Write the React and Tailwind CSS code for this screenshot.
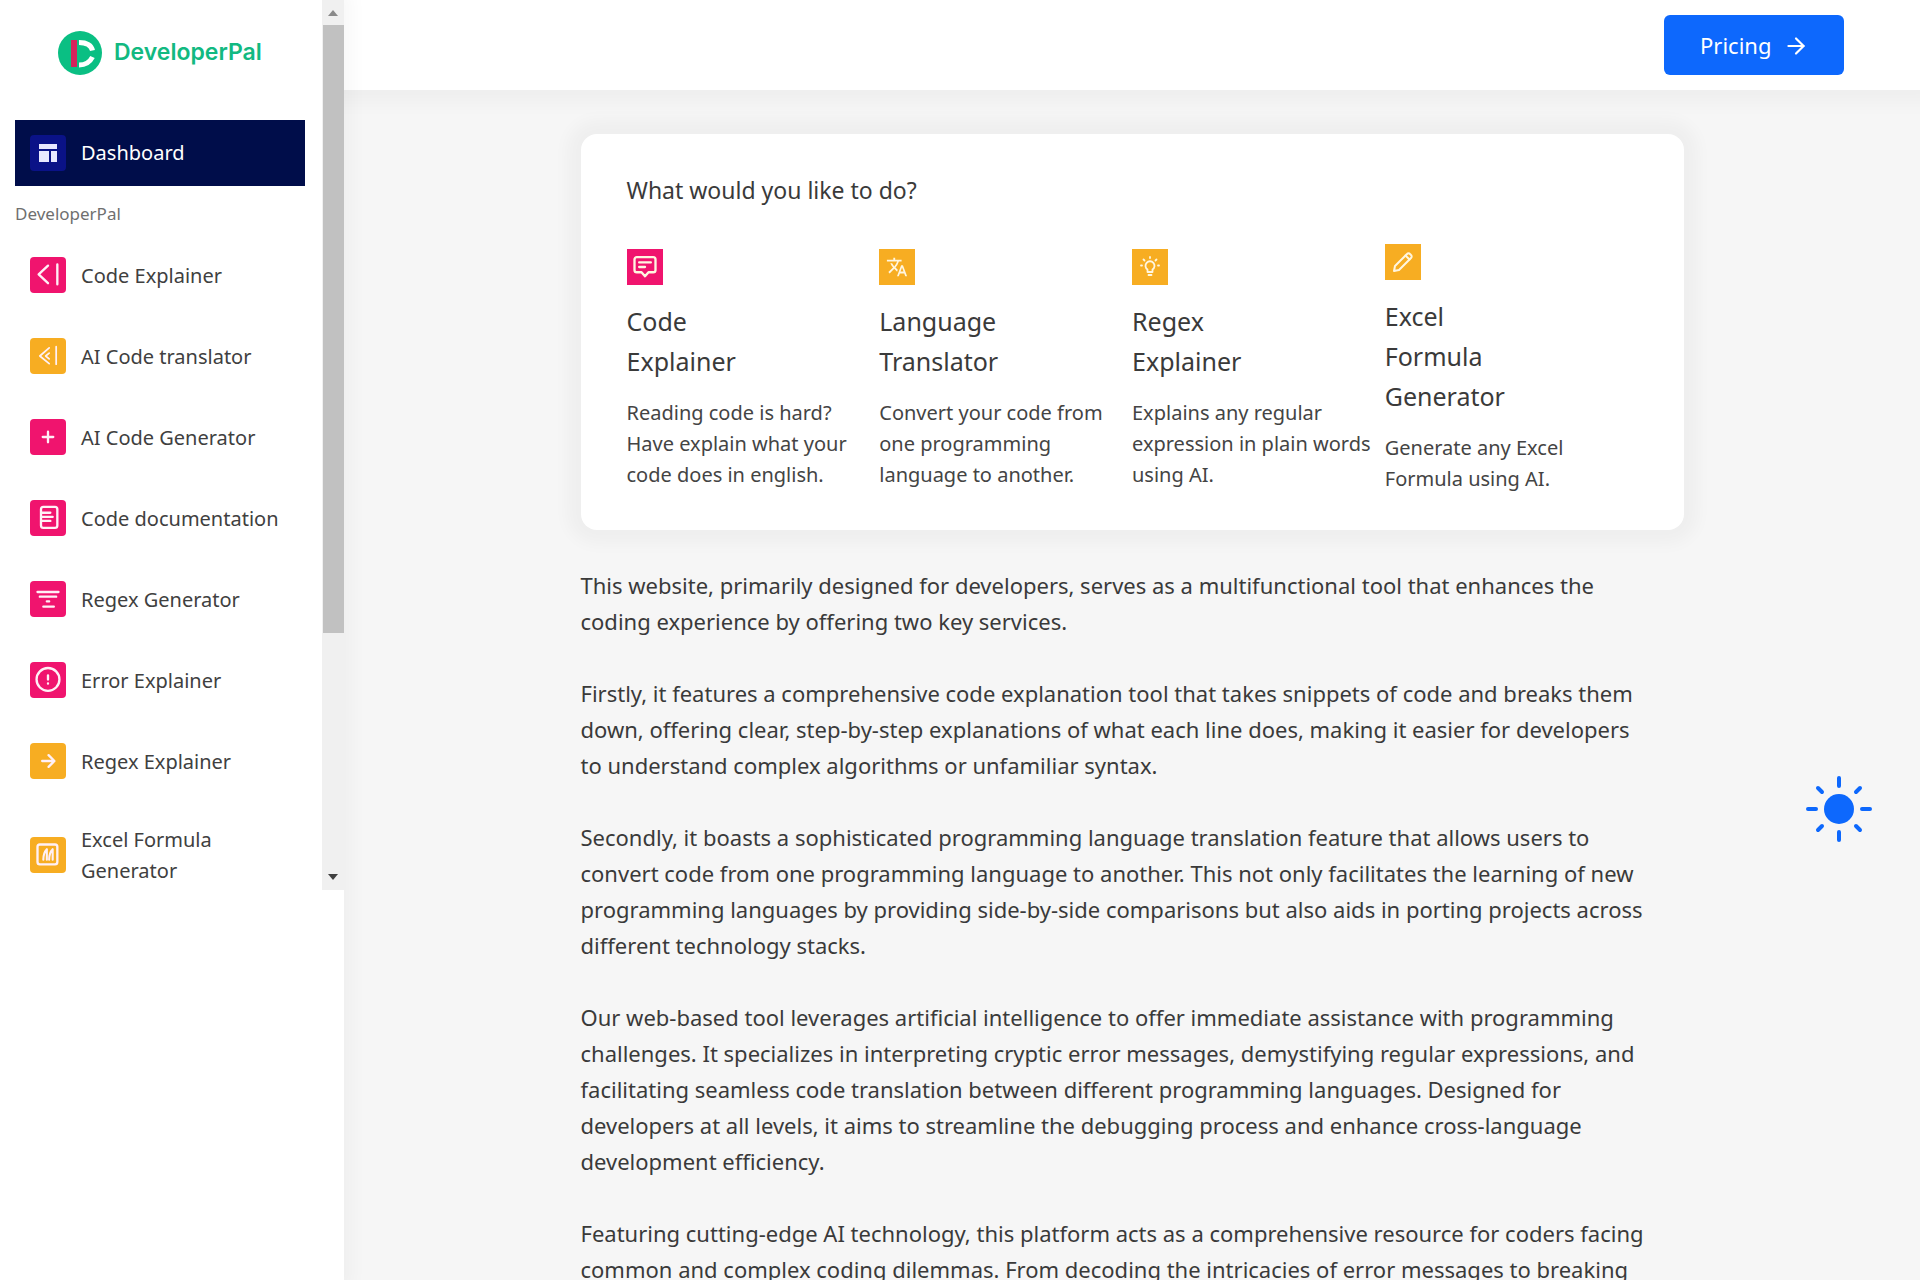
import React from 'react';
import { ArrowRight } from 'lucide-react';
import { MdTranslate } from 'react-icons/md';

const PINK = 'bg-[#f0146e]';
const YELLOW = 'bg-[#f7ad22]';

const Icon = ({ children, className = 'w-7 h-7' }) => (
  <svg
    viewBox="0 0 24 24"
    className={className}
    fill="none"
    stroke="currentColor"
    strokeWidth="2"
    strokeLinecap="round"
    strokeLinejoin="round"
    aria-hidden="true"
  >
    {children}
  </svg>
);

const CodeIcon = () => (
  <Icon>
    <path d="M12 4 4 11.500l8 7.500M20 3v17" />
  </Icon>
);

const TranslateCodeIcon = () => (
  <Icon>
    <path d="M13 5 5 12l8 6.500M13 9.500l-3 2.500 3 2.500M19 4v15" strokeWidth="1.500" />
  </Icon>
);

const PlusIcon = () => (
  <Icon>
    <path d="M12 7.500v9M7.500 12h9" />
  </Icon>
);

const DocIcon = () => (
  <Icon>
    <rect x="6" y="2.500" width="14" height="18" rx="2" />
    <path d="M7 7.500h7M7 11h9M7 14.500h7" />
  </Icon>
);

const LinesIcon = () => (
  <Icon>
    <path d="M3 6h18M5 10h14M11 14h2M8 18.500h9" />
  </Icon>
);

const ErrorIcon = () => (
  <Icon>
    <circle cx="12" cy="11.500" r="9.800" />
    <path d="M12 8v3.500M12 15v.1" />
  </Icon>
);

const ArrowIcon = () => (
  <Icon>
    <path d="M7 12h9M12.500 7l5 5-5 5" />
  </Icon>
);

const FormulaIcon = () => (
  <Icon>
    <rect x="3" y="3" width="17" height="17" rx="2" />
    <path d="M8 16c0-4 1-7 3-9v9M13 16c0-4 1-7 3-9v9" strokeWidth="1.800" />
  </Icon>
);

const MessageIcon = () => (
  <Icon className="w-7 h-7">
    <path d="M3 5.500a2 2 0 0 1 2-2h14a2 2 0 0 1 2 2v9a2 2 0 0 1-2 2h-4L12 20l-3-3.500H5a2 2 0 0 1-2-2z" />
    <path d="M7 8h10M7 12h5" />
  </Icon>
);

const BulbIcon = () => (
  <Icon className="w-6 h-6">
    <path d="M9.500 17v-2.500a4.500 4.500 0 1 1 5 0V17z" strokeWidth="1.800" />
    <path d="M10.500 20h3M12 2v1M4 10.500H3M21 10.500h-1M5.500 4.500l1 1M18.500 4.500l-1 1" strokeWidth="1.800" />
  </Icon>
);

const PencilIcon = () => (
  <Icon className="w-6 h-6">
    <path d="M3 21l1-5L16 4a2 2 0 0 1 3 0l1 1a2 2 0 0 1 0 3L8 20z" />
    <path d="M14.500 5.500l4 4" />
  </Icon>
);

const menu = [
  { label: 'Code Explainer', color: PINK, icon: <CodeIcon /> },
  { label: 'AI Code translator', color: YELLOW, icon: <TranslateCodeIcon /> },
  { label: 'AI Code Generator', color: PINK, icon: <PlusIcon /> },
  { label: 'Code documentation', color: PINK, icon: <DocIcon /> },
  { label: 'Regex Generator', color: PINK, icon: <LinesIcon /> },
  { label: 'Error Explainer', color: PINK, icon: <ErrorIcon /> },
  { label: 'Regex Explainer', color: YELLOW, icon: <ArrowIcon /> },
  { label: 'Excel Formula Generator', color: YELLOW, icon: <FormulaIcon /> },
];

const tools = [
  {
    title: 'Code Explainer',
    text: 'Reading code is hard? Have explain what your code does in english.',
    color: PINK,
    icon: <MessageIcon />,
  },
  {
    title: 'Language Translator',
    text: 'Convert your code from one programming language to another.',
    color: YELLOW,
    icon: <MdTranslate className="w-[22px] h-[22px]" />,
  },
  {
    title: 'Regex Explainer',
    text: 'Explains any regular expression in plain words using AI.',
    color: YELLOW,
    icon: <BulbIcon />,
  },
  {
    title: 'Excel Formula Generator',
    text: 'Generate any Excel Formula using AI.',
    color: YELLOW,
    icon: <PencilIcon />,
  },
];

const paragraphs = [
  'This website, primarily designed for developers, serves as a multifunctional tool that enhances the coding experience by offering two key services.',
  'Firstly, it features a comprehensive code explanation tool that takes snippets of code and breaks them down, offering clear, step-by-step explanations of what each line does, making it easier for developers to understand complex algorithms or unfamiliar syntax.',
  'Secondly, it boasts a sophisticated programming language translation feature that allows users to convert code from one programming language to another. This not only facilitates the learning of new programming languages by providing side-by-side comparisons but also aids in porting projects across different technology stacks.',
  'Our web-based tool leverages artificial intelligence to offer immediate assistance with programming challenges. It specializes in interpreting cryptic error messages, demystifying regular expressions, and facilitating seamless code translation between different programming languages. Designed for developers at all levels, it aims to streamline the debugging process and enhance cross-language development efficiency.',
  'Featuring cutting-edge AI technology, this platform acts as a comprehensive resource for coders facing common and complex coding dilemmas. From decoding the intricacies of error messages to breaking',
];

const Logo = () => (
  <a href="#" className="flex items-center gap-3 h-[105px] pl-[43px]">
    <svg viewBox="0 0 44 44" className="w-11 h-11" aria-hidden="true">
      <circle cx="22" cy="22" r="22" fill="#0abf83" />
      <path d="M13 9h6v27h-6z" fill="#d5215c" />
      <path d="M21 11.500c7 0 12 2 13.500 8M21 34c7 0 11-3 13.500-8" fill="none" stroke="#fff" strokeWidth="5" />
    </svg>
    <span className="font-['Inter'] text-[23px] font-semibold text-[#12b981]">DeveloperPal</span>
  </a>
);

const Sidebar = () => (
  <aside className="w-[344px] shrink-0 bg-white shadow-[0_0_16px_8px_rgba(0,0,0,0.03)] z-10">
    <div className="flex">
      <nav className="flex-1 pl-[15px] pr-[17px]">
        <Logo />
        <a href="#" className="mt-[15px] flex items-center px-[15px] h-[66px] bg-[#000d4a] text-white text-xl">
          <span className="flex items-center justify-center w-9 h-9 mr-[15px] rounded bg-[#0a1287]">
            <svg viewBox="0 0 18 18" className="w-[18px] h-[18px]" fill="#e8e8ff" aria-hidden="true">
              <path d="M0 0h18v5H0zM0 7h10v11H0zM12 7h6v11h-6z" />
            </svg>
          </span>
          Dashboard
        </a>
        <h6 className="py-[10px] text-[17px] leading-9 text-[#6f6f6f]">DeveloperPal</h6>
        <ul className="flex flex-col gap-[15px]">
          {menu.map((item) => (
            <li key={item.label} className="group">
              <a
                href="#"
                className="flex items-center py-[15px] px-[15px] group-last:pb-1 text-xl leading-[31px] text-[#404040]"
              >
                <span className={`flex items-center justify-center shrink-0 w-9 h-9 mr-[15px] rounded text-[#fff0f6] ${item.color}`}>
                  {item.icon}
                </span>
                <span className="group-last:w-40">{item.label}</span>
              </a>
            </li>
          ))}
        </ul>
      </nav>
      <div className="w-[22px] flex flex-col items-center bg-[#f0f0f0]" aria-hidden="true">
        <span className="h-[25px] flex items-center text-[#8a8a8a]">
          <svg viewBox="0 0 10 6" className="w-[10px] h-[6px]" fill="currentColor">
            <path d="M0 6 5 0l5 6z" />
          </svg>
        </span>
        <span className="w-[21px] h-[608px] bg-[#c1c1c1]" />
        <span className="mt-auto h-[26px] flex items-center text-[#404040]">
          <svg viewBox="0 0 10 6" className="w-[10px] h-[6px]" fill="currentColor">
            <path d="M0 0h10L5 6z" />
          </svg>
        </span>
      </div>
    </div>
  </aside>
);

const Header = () => (
  <header className="h-[90px] flex items-center justify-end pr-[76px] bg-white shadow-[0_0_16px_14px_rgba(0,0,0,0.03)]">
    <a
      href="#"
      className="flex items-center gap-3 w-[180px] h-[60px] pt-px pl-9 rounded-md bg-[#0d68fd] text-white text-[22px]"
    >
      Pricing
      <ArrowRight className="w-[26px] h-[26px]" />
    </a>
  </header>
);

const ToolCard = ({ tool }) => (
  <a href="#" className="block">
    <span className={`flex items-center justify-center w-9 h-9 text-[#fff6e0] ${tool.color}`}>{tool.icon}</span>
    <h5 className="mt-4 w-[150px] text-[25px] leading-10">{tool.title}</h5>
    <p className="mt-4 text-xl leading-[31px] text-[#444]">{tool.text}</p>
  </a>
);

const App = () => {
  return (
    <div className="flex h-screen overflow-hidden bg-[#f6f6f6] font-['Noto_Sans',sans-serif] text-[#3a3a3a]">
      <Sidebar />
      <div className="flex-1 min-w-0">
        <Header />
        <main className="max-w-[1103px] mx-auto pt-11">
          <section className="px-[46px] py-9 rounded-2xl bg-white shadow-[0_0_16px_14px_rgba(0,0,0,0.03)]">
            <h4 className="text-[23px] leading-10">What would you like to do?</h4>
            <div className="mt-[34px] grid grid-cols-4 items-center">
              {tools.map((tool) => (
                <ToolCard key={tool.title} tool={tool} />
              ))}
            </div>
          </section>
          <article className="mt-[37px] pr-9 flex flex-col gap-9 text-[22px] leading-9">
            {paragraphs.map((text) => (
              <p key={text}>{text}</p>
            ))}
          </article>
        </main>
      </div>
      <button type="button" aria-label="Toggle theme" className="fixed right-12 top-[776px] w-[66px] h-[66px] text-[#0d68fd]">
        <svg viewBox="0 0 66 66" className="w-full h-full" fill="none" stroke="currentColor" strokeWidth="4" strokeLinecap="round">
          <circle cx="33" cy="33" r="15" fill="currentColor" stroke="none" />
          <path d="M33 2v8M33 56v8M2 33h8M56 33h8M12 12l4 4M50 50l4 4M12 54l4-4M50 16l4-4" />
        </svg>
      </button>
    </div>
  );
};

export default App;
